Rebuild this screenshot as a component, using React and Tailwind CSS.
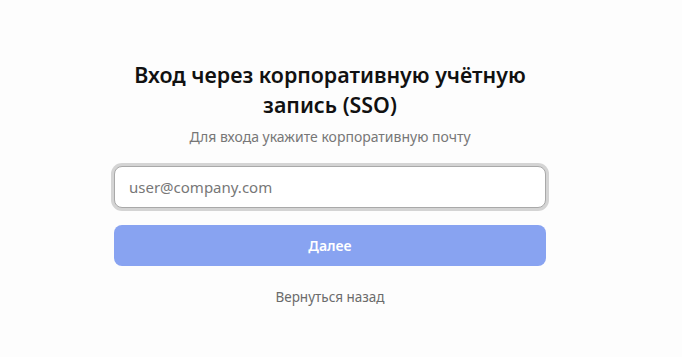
import React, { useState } from "react";

export default function App() {
  const [email, setEmail] = useState("");

  return (
    <div
      className="min-h-screen w-full bg-[#fdfdfd] pr-[22px] pt-[60px]"
      style={{ fontFamily: '"Noto Sans", "Open Sans", sans-serif' }}
    >
      <div className="mx-auto w-[432px] flex flex-col items-center">
        <h1 className="text-center text-[21.4px] leading-[30px] font-semibold text-[#111] px-[12px]">
          Вход через корпоративную учётную запись (SSO)
        </h1>
        <p className="mt-[7px] text-[14px] leading-[20px] text-[#777]">
          Для входа укажите корпоративную почту
        </p>
        <form className="mt-[19px] w-full flex flex-col" onSubmit={(e) => e.preventDefault()}>
          <input
            type="email"
            value={email}
            onChange={(e) => setEmail(e.target.value)}
            placeholder="user@company.com"
            className="h-[42px] w-full rounded-[8px] border border-[#a9a9a9] bg-white px-[14px] text-[15px] text-[#333] placeholder:text-[#777] outline-none ring-[3px] ring-[#d4d4d4]"
          />
          <button
            type="submit"
            className="mt-[17px] h-[41px] w-full rounded-[8px] bg-[#88a3f1] text-[14px] font-semibold text-white"
          >
            Далее
          </button>
        </form>
        <button className="mt-[21px] text-[13.5px] leading-[20px] text-[#6b6b6b]">
          Вернуться назад
        </button>
      </div>
    </div>
  );
}
